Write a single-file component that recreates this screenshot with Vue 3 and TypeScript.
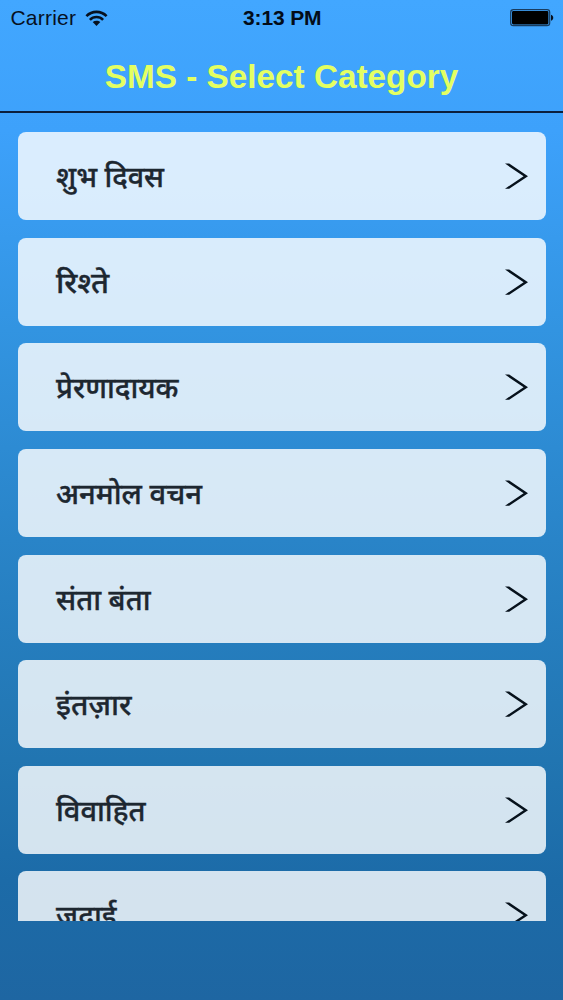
<script setup lang="ts">
interface Category {
  label: string
  width: number
}

const categories: Category[] = [
  { label: 'शुभ दिवस', width: 108 },
  { label: 'रिश्ते', width: 53 },
  { label: 'प्रेरणादायक', width: 122.5 },
  { label: 'अनमोल वचन', width: 146 },
  { label: 'संता बंता', width: 94.5 },
  { label: 'इंतज़ार', width: 75.5 },
  { label: 'विवाहित', width: 89.5 },
  { label: 'जुदाई', width: 60.5 },
]
</script>

<template>
  <div class="screen">
    <div class="status">
      <div class="carrier">
        <span class="carrier-name">Carrier</span>
        <svg class="wifi" width="23" height="17" viewBox="0 0 23 17">
          <path d="M1.4 6.1C7 .4 16 .4 21.6 6.1M4.9 9.8C8.6 6.1 14.4 6.1 18.1 9.8" fill="none" stroke="#07111f" stroke-width="2.6" />
          <path d="M7.7 12C9.9 10.2 13.1 10.2 15.3 12L11.5 16Z" fill="#07111f" />
        </svg>
      </div>
      <span class="time">3:13 PM</span>
      <svg class="battery" width="44" height="18" viewBox="0 0 44 18">
        <rect x=".7" y=".7" width="39" height="16" rx="2.7" fill="none" stroke="#183c5f" stroke-width="1.2" />
        <rect x="2" y="2" width="36.4" height="13.4" rx="1.4" fill="#000" />
        <path d="M41 5.8C44 6.7 44 10.8 41 11.7Z" fill="#07111f" />
      </svg>
    </div>
    <h1 class="title">SMS - Select Category</h1>
    <div class="list">
      <div v-for="item in categories" :key="item.label" class="card">
        <svg class="label" width="200" height="60" viewBox="0 0 200 60">
          <text x="0" y="41" lang="hi" :textLength="item.width" lengthAdjust="spacingAndGlyphs">{{ item.label }}</text>
        </svg>
        <svg class="chevron" width="24" height="28" viewBox="0 0 24 28">
          <path d="M0 1.6H4.2L23 14.2L4.2 26.7H0L18.6 14.2Z" fill="#06111b" />
        </svg>
      </div>
    </div>
  </div>
</template>

<style>
body {
  margin: 0;
}
</style>

<style scoped>
.screen {
  width: 563px;
  height: 1000px;
  overflow: hidden;
  font-family: "Liberation Sans", Arial, sans-serif;
  background: linear-gradient(180deg, #42a7ff 0%, #3da1fb 13%, #3294e1 33%, #2984c8 54%, #2175b1 76%, #1c6ba8 88%, #1e66a2 100%);
}

.status {
  display: grid;
  grid-template-columns: 1fr auto 1fr;
  align-items: center;
  height: 36px;
  padding: 0 9px 0 10.5px;
  box-sizing: border-box;
  font-size: 21px;
  color: #07111f;
}

.carrier {
  display: flex;
  align-items: center;
  gap: 9px;
}

.carrier-name {
  letter-spacing: 0.2px;
}

.time {
  font-weight: 700;
  letter-spacing: -0.15px;
  color: #030c18;
}

.battery {
  justify-self: end;
}

.title {
  box-sizing: border-box;
  height: 77px;
  margin: 0;
  border-bottom: 2px solid #0b1f3d;
  font-size: 33.3px;
  line-height: 82px;
  font-weight: 700;
  text-align: center;
  color: #e3ff62;
}

.list {
  display: flex;
  flex-direction: column;
  gap: 17.6px;
  box-sizing: border-box;
  height: 807.5px;
  padding: 19.2px 17.5px 0;
  overflow: hidden;
}

.card {
  display: flex;
  flex: none;
  align-items: center;
  justify-content: space-between;
  box-sizing: border-box;
  height: 88px;
  padding: 0 17px 0 38px;
  border-radius: 8px;
  background: rgba(255, 255, 255, 0.81);
}

.label {
  overflow: visible;
}

.label text {
  font-family: "Noto Sans", "Noto Sans Devanagari", sans-serif;
  font-size: 28.5px;
  font-weight: 500;
  fill: #1d2730;
  stroke: #1d2730;
  stroke-width: 0.35px;
}
</style>
